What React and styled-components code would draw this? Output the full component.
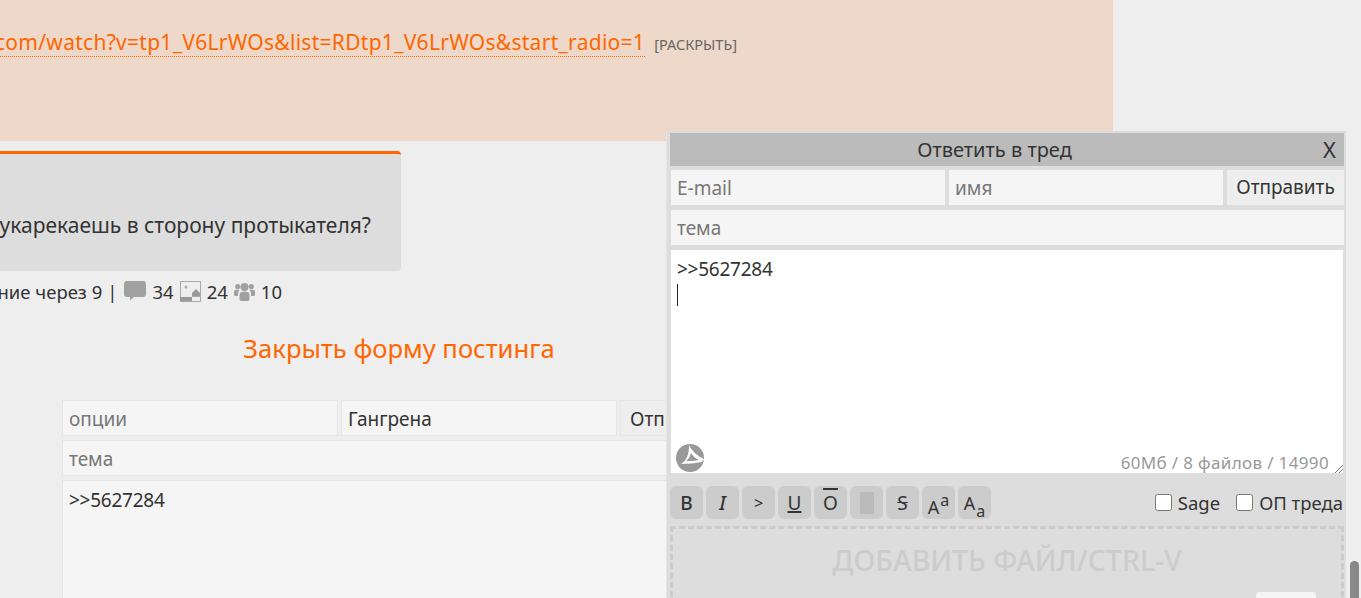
import React from 'react'
import styled, { createGlobalStyle } from 'styled-components'

const Global = createGlobalStyle`
  html, body { margin: 0; padding: 0; height: 100%; overflow: hidden; background: #eee; }
  body { font-family: "Noto Sans", "Liberation Sans", sans-serif; font-size: 19px; color: #333; }
`

const Viewport = styled.div`
  position: relative;
  width: 1361px;
  height: 598px;
  overflow: hidden;
`
// the page is scrolled sideways in the shot, so the content starts left of the window
const Page = styled.div`
  width: 1561px;
  margin-left: -200px;
`
const Post = styled.div`
  width: 1313px;
  height: 141px;
  background: #eed8c9;
  display: flex;
  justify-content: flex-end;
  align-items: baseline;
  gap: 9px;
  box-sizing: border-box;
  padding: 29px 376px 0 0;
`
const Link = styled.a`
  color: #f60;
  border-bottom: 1px dotted #f60;
  white-space: nowrap;
  font-size: 21px;
  letter-spacing: 0.28px;
  line-height: 27px;
`
const Expand = styled.span`
  font-size: 14.5px;
  color: #666;
`
const Thread = styled.div`
  width: 601px;
  height: 120px;
  margin-top: 10px;
  box-sizing: border-box;
  background: #ddd;
  border-top: 3px solid #f60;
  border-radius: 4px;
  padding: 57px 30px 0 0;
  text-align: right;
  font-size: 21px;
  line-height: 28px;
`
const Stats = styled.div`
  width: 482px;
  height: 22px;
  margin-top: 9px;
  display: flex;
  justify-content: flex-end;
  align-items: center;
  gap: 6px;
  font-size: 18.5px;
  white-space: nowrap;
`
const Sep = styled.span`
  margin: 0 1px 0 -1px;
`
const CloseLink = styled.div`
  width: 1198px;
  margin-top: 31px;
  text-align: center;
  font-size: 25.6px;
  line-height: 32px;
  color: #f60;
`
const Form = styled.div`
  width: 672px;
  margin: 35px 0 0 262px;
  display: flex;
  flex-direction: column;
  gap: 4px;
`
const Row = styled.div`
  display: flex;
  gap: 3px;
`
const Field = styled.input`
  flex: 1;
  min-width: 0;
  height: 36px;
  box-sizing: border-box;
  padding: 2px 6px 0;
  background: #f5f5f5;
  border: 1px solid #e6e6e6;
  outline: none;
  font: inherit;
  color: #333;
  &::placeholder { color: #777; opacity: 1; }
`
const Send = styled.div`
  width: 114px;
  height: 36px;
  box-sizing: border-box;
  padding-left: 9px;
  background: #eee;
  border: 1px solid #e6e6e6;
  line-height: 36px;
  white-space: nowrap;
  overflow: hidden;
`
const Body = styled.div`
  height: 200px;
  box-sizing: border-box;
  padding: 7px 6px;
  background: #f5f5f5;
  border: 1px solid #e6e6e6;
  line-height: 24px;
  letter-spacing: -0.25px;
`

const Popup = styled.div`
  position: absolute;
  left: 666px;
  top: 131px;
  width: 680px;
  box-sizing: border-box;
  padding: 2px 2px 0 3px;
  background: #ddd;
  border-left: 1px solid #e4e4e4;
  display: flex;
  flex-direction: column;
`
const Header = styled.div`
  height: 33px;
  box-sizing: border-box;
  padding-right: 25px;
  background: #bbb;
  display: flex;
  align-items: center;
  justify-content: center;
  position: relative;
  font-size: 20px;
  line-height: 33px;
`
const CloseX = styled.span`
  position: absolute;
  right: 8px;
  top: 0;
  font-size: 22px;
`
const PopupRow = styled.div`
  display: flex;
  gap: 4px;
  margin-top: ${p => p.$top}px;
  padding: 0 0 0 1px;
`
const PopupField = styled.input`
  flex: 1;
  min-width: 0;
  height: 35px;
  box-sizing: border-box;
  padding: 0 6px;
  border: 0;
  outline: none;
  background: #f5f5f5;
  font: inherit;
  &::placeholder { color: #777; opacity: 1; }
`
const PopupSend = styled.div`
  width: 117px;
  height: 35px;
  background: #eee;
  text-align: center;
  line-height: 35px;
`
const Editor = styled.div`
  position: relative;
  height: 223px;
  margin: 5px 1px 0;
  box-sizing: border-box;
  padding: 7px 6px;
  background: #fff;
  line-height: 24px;
  letter-spacing: -0.25px;
`
const Caret = styled.div`
  width: 1px;
  height: 22px;
  margin-top: 3px;
  background: #222;
`
const Logo = styled.svg`
  position: absolute;
  left: 5px;
  bottom: 1px;
  width: 28px;
  height: 28px;
`
const Counter = styled.span`
  position: absolute;
  right: 14px;
  bottom: -1px;
  font-size: 17px;
  line-height: 22px;
  color: #999;
  letter-spacing: 0.35px;
`
const Grip = styled.svg`
  position: absolute;
  right: 0;
  bottom: 0;
  width: 8px;
  height: 8px;
`
const Tools = styled.div`
  display: flex;
  align-items: center;
  gap: 3px;
  height: 33px;
  margin-top: 13px;
`
const Tool = styled.div`
  width: 33px;
  height: 33px;
  border-radius: 6px;
  background: #ccc;
  display: flex;
  align-items: center;
  justify-content: center;
  font-size: 19px;
  line-height: 24px;
  color: #333;
`
const Bold = styled.span`
  font-weight: 500;
`
const Slant = styled.span`
  font-style: italic;
  font-weight: 500;
`
const Over = styled.span`
  text-decoration: overline;
  text-decoration-thickness: 2px;
`
const Under = styled.span`
  text-decoration: underline;
  text-decoration-thickness: 2px;
`
const Strike = styled.span`
  text-decoration: line-through;
`
const Quote = styled.span`
  font-size: 16px;
`
const Spoiler = styled.span`
  width: 14px;
  height: 22px;
  background: #bbb;
`
const BigA = styled.span`
  font-size: 18px;
  margin-top: ${p => p.$low ? 9 : 0}px;
`
const SmallA = styled.small`
  font-size: 16px;
  align-self: ${p => p.$up ? 'flex-start' : 'flex-end'};
  margin: ${p => p.$up ? '7px 0 0 1px' : '0 0 1px 1px'};
  line-height: 14px;
`
const Options = styled.div`
  margin-left: auto;
  margin-right: 1px;
  display: flex;
  gap: 16px;
  white-space: nowrap;
`
const Option = styled.label`
  display: flex;
  align-items: center;
  gap: 6px;
  font-size: 18.5px;
`
const Check = styled.input`
  width: 17px;
  height: 17px;
  margin: 0;
`
const Drop = styled.div`
  position: relative;
  height: 90px;
  margin-top: 7px;
  box-sizing: border-box;
  border: 3px dashed #ccc;
  text-align: center;
  font-size: 28.5px;
  font-weight: 500;
  line-height: 62px;
  color: #ccc;
`
const Mini = styled.div`
  position: absolute;
  right: 25px;
  top: 63px;
  width: 60px;
  height: 20px;
  border-radius: 4px;
  background: #f5f5f5;
`
const Thumb = styled.div`
  position: absolute;
  left: 1350px;
  top: 561px;
  width: 9px;
  height: 50px;
  border-radius: 5px;
  background: #888;
`

const ChatIcon = () => (
  <svg width="22" height="20" viewBox="0 0 22 20">
    <path d="M3 0h16a3 3 0 0 1 3 3v10a3 3 0 0 1-3 3H10l-4 3.5V16H3a3 3 0 0 1-3-3V3a3 3 0 0 1 3-3z" fill="#a0a0a0" />
  </svg>
)
const ImageIcon = () => (
  <svg width="21" height="21" viewBox="0 0 21 21">
    <rect x="0.5" y="0.5" width="20" height="20" fill="none" stroke="#aaa" />
    <circle cx="6" cy="6" r="1.5" fill="#aaa" />
    <path d="M12 12l4-4 4 4v3h-8z" fill="#999" />
    <rect x="0" y="16" width="12" height="4" fill="#999" />
    <path d="M12 15.5h8" stroke="#aaa" />
  </svg>
)
const UsersIcon = () => (
  <svg width="21" height="19" viewBox="0 0 21 19">
    <g fill="#a0a0a0">
      <circle cx="10.5" cy="5" r="4" />
      <circle cx="3.7" cy="4.500" r="2.600" />
      <circle cx="17.300" cy="4.500" r="2.600" />
      <path d="M5.500 13c0-2.500 2-3.500 5-3.500s5 1 5 3.500v4c0 1-1 2-2 2h-6c-1 0-2-1-2-2z" />
      <path d="M0 10c0-1.800 1.500-2.500 3.500-2.500 .7 0 1.500 .2 2 .5-1 1-1.500 2.500-1.500 4v2H1.500C.6 14 0 13.400 0 12.500z" />
      <path d="M21 10c0-1.800-1.500-2.500-3.500-2.500-.7 0-1.500 .2-2 .5 1 1 1.500 2.500 1.500 4v2h2.500c.9 0 1.500-.6 1.500-1.500z" />
    </g>
  </svg>
)

export default function App() {
  return (
    <Viewport>
      <Global />
      <Page>
        <Post>
          <Link>https://www.youtube.com/watch?v=tp1_V6LrWOs&amp;list=RDtp1_V6LrWOs&amp;start_radio=1</Link>
          <Expand>[РАСКРЫТЬ]</Expand>
        </Post>
        <Thread>Ты чего кукарекаешь в сторону протыкателя?</Thread>
        <Stats>
          Последнее сообщение через 9 <Sep>|</Sep>
          <ChatIcon /> 34
          <ImageIcon /> 24
          <UsersIcon /> 10
        </Stats>
        <CloseLink>Закрыть форму постинга</CloseLink>
        <Form>
          <Row>
            <Field placeholder="опции" />
            <Field defaultValue="Гангрена" />
            <Send>Отправить</Send>
          </Row>
          <Row>
            <Field placeholder="тема" />
          </Row>
          <Body>&gt;&gt;5627284</Body>
        </Form>
      </Page>

      <Popup>
        <Header>
          Ответить в тред
          <CloseX>X</CloseX>
        </Header>
        <PopupRow $top={4}>
          <PopupField placeholder="E-mail" />
          <PopupField placeholder="имя" />
          <PopupSend>Отправить</PopupSend>
        </PopupRow>
        <PopupRow $top={5}>
          <PopupField placeholder="тема" />
        </PopupRow>
        <Editor>
          &gt;&gt;5627284
          <Caret />
          <Logo viewBox="0 0 28 28">
            <circle cx="14" cy="14" r="14" fill="#999" />
            <path d="M13 1c3 6 8 11 15 14l-2 3c-6 1-15 2-21 2 5-3 8-8 8-19z" fill="#fff" />
            <path d="M15 9c2 3 4 5 8 7-4 1-9 1-13 1 3-2 4-5 5-8z" fill="#999" />
          </Logo>
          <Counter>60Мб / 8 файлов / 14990</Counter>
          <Grip viewBox="0 0 8 8">
            <path d="M0 8L8 0M4 8L8 4" stroke="#777" strokeWidth="1" />
          </Grip>
        </Editor>
        <Tools>
          <Tool><Bold>B</Bold></Tool>
          <Tool><Slant>I</Slant></Tool>
          <Tool><Quote>&gt;</Quote></Tool>
          <Tool><Under>U</Under></Tool>
          <Tool><Over>O</Over></Tool>
          <Tool><Spoiler /></Tool>
          <Tool><Strike>S</Strike></Tool>
          <Tool><BigA $low>A</BigA><SmallA $up>a</SmallA></Tool>
          <Tool><BigA>A</BigA><SmallA>a</SmallA></Tool>
          <Options>
            <Option><Check type="checkbox" />Sage</Option>
            <Option><Check type="checkbox" />ОП треда</Option>
          </Options>
        </Tools>
        <Drop>
          ДОБАВИТЬ ФАЙЛ/CTRL-V
          <Mini />
        </Drop>
      </Popup>
      <Thumb />
    </Viewport>
  )
}
